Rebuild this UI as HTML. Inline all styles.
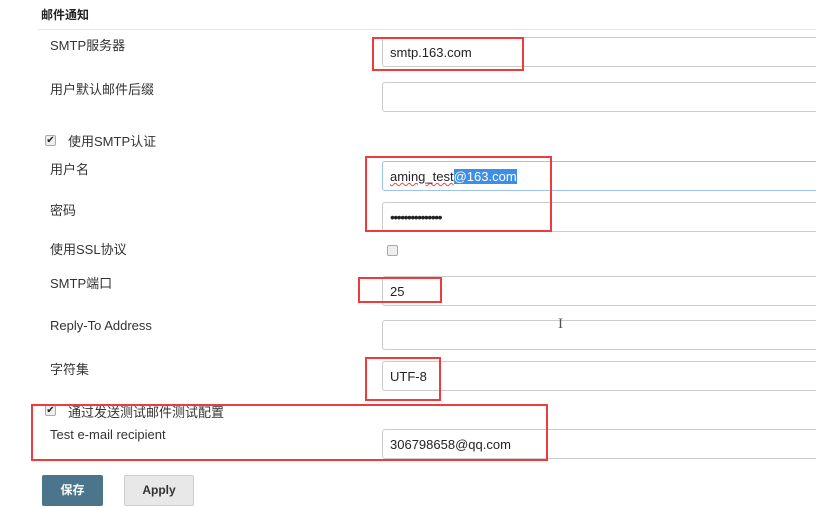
<!DOCTYPE html>
<html><head><meta charset="utf-8"><style>
body{margin:0;width:816px;height:508px;background:#fff;position:relative;overflow:hidden;font-family:"Liberation Sans","Noto Sans CJK SC",sans-serif;color:#333;font-size:13px}
.a{position:absolute;white-space:nowrap}
.in{position:absolute;left:382px;width:460px;height:30px;border:1px solid #ccc;border-radius:3px;background:#fff;box-sizing:border-box;padding:0 0 0 7px;line-height:29px;font-size:13px;color:#222}
.r{position:absolute;border:2px solid #ee3b3b;box-sizing:border-box}
.cb{position:absolute;width:11px;height:11px;border:1px solid #aaa;border-radius:2px;background:#eee;box-sizing:border-box;font-size:10px;line-height:9px;text-align:center;color:#222}
</style></head><body>
<div class="a" style="left:41px;top:6px;font-weight:bold;font-size:12px;color:#222">邮件通知</div>
<div class="a" style="left:38px;top:29px;width:800px;height:1px;background:#e6e6e6"></div>

<div class="a" style="left:50px;top:35px">SMTP服务器</div>
<div class="in" style="top:37px">smtp.163.com</div>

<div class="a" style="left:50px;top:79px">用户默认邮件后缀</div>
<div class="in" style="top:82px"></div>

<div class="cb" style="left:45px;top:135px">✔</div>
<div class="a" style="left:68px;top:131px">使用SMTP认证</div>

<div class="a" style="left:50px;top:159px">用户名</div>
<div class="in" style="top:161px;border-color:#9ec3e8"><span style="text-decoration:underline wavy #e44;text-decoration-thickness:1px">aming_test</span><span style="background:#3d8ee8;color:#fff">@163.com</span></div>

<div class="a" style="left:50px;top:200px">密码</div>
<div class="in" style="top:202px;font-size:14px;letter-spacing:-1.5px">•••••••••••••••</div>

<div class="a" style="left:50px;top:239px">使用SSL协议</div>
<div class="cb" style="left:387px;top:245px"></div>

<div class="a" style="left:50px;top:273px">SMTP端口</div>
<div class="in" style="top:276px">25</div>

<div class="a" style="left:50px;top:318px">Reply-To Address</div>
<div class="in" style="top:320px"></div>
<div class="a" style="left:558px;top:316px;font-size:15px;color:#555;font-family:'Liberation Serif',serif">I</div>

<div class="a" style="left:50px;top:359px">字符集</div>
<div class="in" style="top:361px">UTF-8</div>

<div class="cb" style="left:45px;top:405px">✔</div>
<div class="a" style="left:68px;top:402px">通过发送测试邮件测试配置</div>
<div class="a" style="left:50px;top:427px">Test e-mail recipient</div>
<div class="in" style="top:429px">306798658@qq.com</div>

<div class="a" style="left:42px;top:475px;width:61px;height:31px;background:#4b758b;border-radius:2px;color:#fff;font-weight:bold;text-align:center;line-height:31px;font-size:12px">保存</div>
<div class="a" style="left:124px;top:475px;width:70px;height:31px;background:#e8e8e8;border:1px solid #ccc;box-sizing:border-box;border-radius:2px;color:#333;font-weight:bold;text-align:center;line-height:29px;font-size:12px">Apply</div>

<div class="r" style="left:372px;top:37px;width:152px;height:34px"></div>
<div class="r" style="left:365px;top:156px;width:187px;height:76px"></div>
<div class="r" style="left:358px;top:277px;width:84px;height:26px"></div>
<div class="r" style="left:365px;top:357px;width:76px;height:44px"></div>
<div class="r" style="left:31px;top:404px;width:517px;height:57px"></div>
</body></html>
